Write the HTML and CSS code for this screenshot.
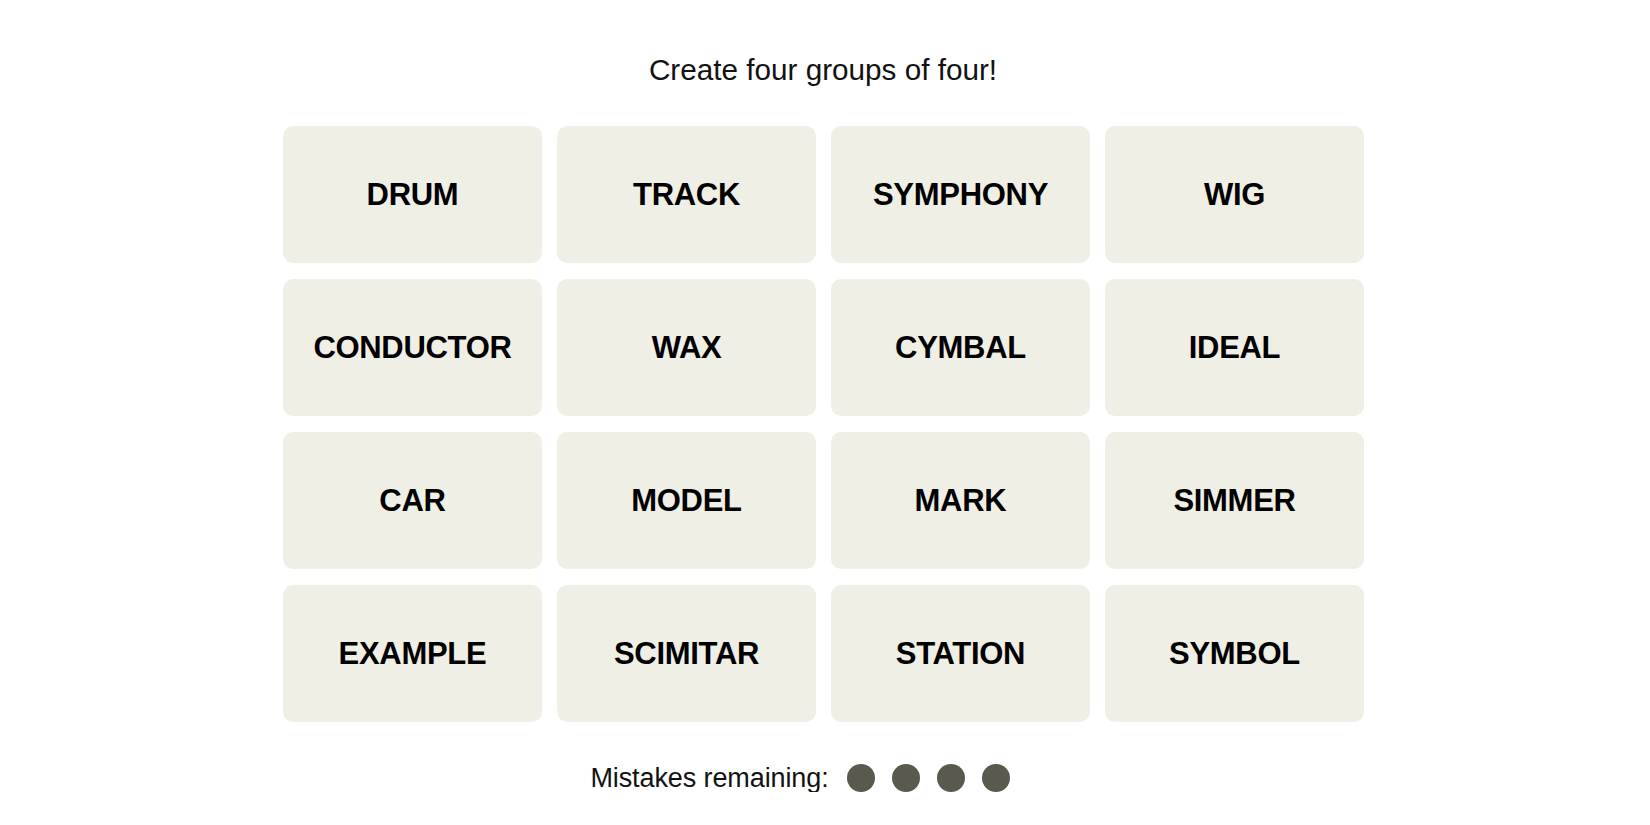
FILE: index.html
```html
<!DOCTYPE html>
<html lang="en">
<head>
<meta charset="utf-8">
<title>Connections</title>
<link rel="stylesheet" href="styles.css">
</head>
<body>
<main class="game">
  <p class="prompt">Create four groups of four!</p>
  <div class="board">
    <button class="tile">DRUM</button>
    <button class="tile">TRACK</button>
    <button class="tile">SYMPHONY</button>
    <button class="tile">WIG</button>
    <button class="tile">CONDUCTOR</button>
    <button class="tile">WAX</button>
    <button class="tile">CYMBAL</button>
    <button class="tile">IDEAL</button>
    <button class="tile">CAR</button>
    <button class="tile">MODEL</button>
    <button class="tile">MARK</button>
    <button class="tile">SIMMER</button>
    <button class="tile">EXAMPLE</button>
    <button class="tile">SCIMITAR</button>
    <button class="tile">STATION</button>
    <button class="tile">SYMBOL</button>
  </div>
  <div class="mistakes">
    <span class="mistakes-label">Mistakes remaining:</span>
    <span class="dots">
      <span class="dot"></span>
      <span class="dot"></span>
      <span class="dot"></span>
      <span class="dot"></span>
    </span>
  </div>
</main>
</body>
</html>
```

FILE: styles.css
```css
html, body {
  margin: 0;
  padding: 0;
  background: #ffffff;
}

body {
  font-family: "Liberation Sans", Arial, sans-serif;
  color: #121212;
}

.game {
  display: flex;
  flex-direction: column;
  align-items: center;
  padding-top: 52px;
}

.prompt {
  margin: 0;
  font-size: 29.7px;
  line-height: 36px;
  font-weight: 400;
  color: #121212;
  padding-right: 4px;
}

.board {
  margin-top: 38px;
  margin-right: 3px;
  display: grid;
  grid-template-columns: repeat(4, 259px);
  grid-auto-rows: 137px;
  column-gap: 15px;
  row-gap: 16px;
}

.tile {
  border: none;
  border-radius: 10px;
  background: #efefe6;
  color: #000000;
  font-family: "Liberation Sans", Arial, sans-serif;
  font-weight: 700;
  font-size: 31px;
  letter-spacing: -0.3px;
  padding: 0;
  display: flex;
  align-items: center;
  justify-content: center;
}

.mistakes {
  margin-top: 42px;
  display: flex;
  align-items: center;
  gap: 18px;
  padding-right: 50px;
}

.mistakes-label {
  font-size: 27px;
  line-height: 28px;
  color: #121212;
  letter-spacing: -0.1px;
}

.dots {
  display: flex;
  gap: 17px;
}

.dot {
  width: 28px;
  height: 28px;
  border-radius: 50%;
  background: #5a594e;
}
```
